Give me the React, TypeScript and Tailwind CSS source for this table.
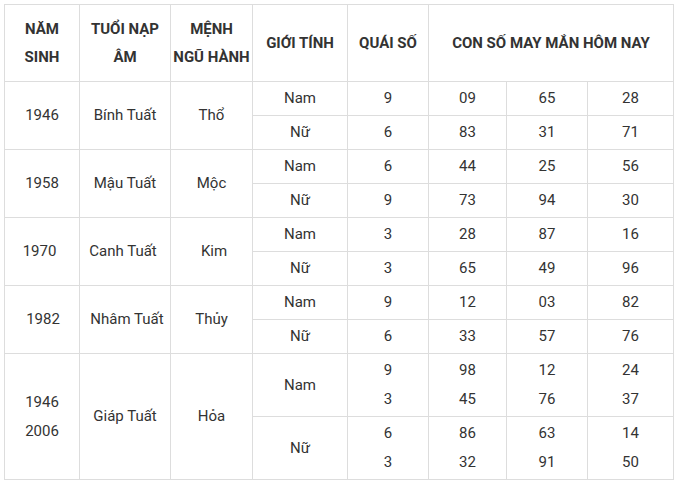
const groups = [
  {
    year: ["1946"],
    nap: "Bính Tuất",
    menh: "Thổ",
    shift: ["", "", ""],
    rows: [
      { sex: "Nam", q: ["9"], n: [["09"], ["65"], ["28"]] },
      { sex: "Nữ", q: ["6"], n: [["83"], ["31"], ["71"]] },
    ],
  },
  {
    year: ["1958"],
    nap: "Mậu Tuất",
    menh: "Mộc",
    shift: ["", "", ""],
    rows: [
      { sex: "Nam", q: ["6"], n: [["44"], ["25"], ["56"]] },
      { sex: "Nữ", q: ["9"], n: [["73"], ["94"], ["30"]] },
    ],
  },
  {
    year: ["1970"],
    nap: "Canh Tuất",
    menh: "Kim",
    shift: ["pr-[5px]", "pr-[4px]", "pl-[5px]"],
    rows: [
      { sex: "Nam", q: ["3"], n: [["28"], ["87"], ["16"]] },
      { sex: "Nữ", q: ["3"], n: [["65"], ["49"], ["96"]] },
    ],
  },
  {
    year: ["1982"],
    nap: "Nhâm Tuất",
    menh: "Thủy",
    shift: ["pl-[2px]", "pl-[4px]", ""],
    rows: [
      { sex: "Nam", q: ["9"], n: [["12"], ["03"], ["82"]] },
      { sex: "Nữ", q: ["6"], n: [["33"], ["57"], ["76"]] },
    ],
  },
  {
    year: ["1946", "2006"],
    nap: "Giáp Tuất",
    menh: "Hỏa",
    shift: ["", "", ""],
    rows: [
      { sex: "Nam", q: ["9", "3"], n: [["98", "45"], ["12", "76"], ["24", "37"]] },
      { sex: "Nữ", q: ["6", "3"], n: [["86", "32"], ["63", "91"], ["14", "50"]] },
    ],
  },
];

const cell = "border border-[#dddddd] text-center align-middle p-0";

function Lines({ items }: { items: string[] }) {
  return (
    <>
      {items.map((t, i) => (
        <div key={i} className="leading-[29px]">
          {t}
        </div>
      ))}
    </>
  );
}

export default function App() {
  return (
    <div className="bg-white w-[680px] h-[486px] pt-[4px] pl-[4px] font-['Roboto',sans-serif] text-[15px] text-[#333333]">
      <table className="border-collapse table-fixed w-[669px]">
        <colgroup>
          <col className="w-[75px]" />
          <col className="w-[91px]" />
          <col className="w-[82px]" />
          <col className="w-[95px]" />
          <col className="w-[81px]" />
          <col className="w-[78px]" />
          <col className="w-[81px]" />
          <col className="w-[86px]" />
        </colgroup>
        <thead>
          <tr className="h-[77px] font-bold uppercase">
            <th className={cell}>
              <div className="leading-[28px]">NĂM</div>
              <div className="leading-[28px]">SINH</div>
            </th>
            <th className={cell}>
              <div className="leading-[28px]">TUỔI NẠP</div>
              <div className="leading-[28px]">ÂM</div>
            </th>
            <th className={cell}>
              <div className="leading-[28px]">MỆNH</div>
              <div className="leading-[28px]">NGŨ HÀNH</div>
            </th>
            <th className={cell}>GIỚI TÍNH</th>
            <th className={cell}>QUÁI SỐ</th>
            <th className={cell} colSpan={3}>
              CON SỐ MAY MẮN HÔM NAY
            </th>
          </tr>
        </thead>
        <tbody>
          {groups.map((g, gi) =>
            g.rows.map((r, ri) => (
              <tr key={`${gi}-${ri}`} className={gi === 4 ? "h-[63px]" : "h-[34px]"}>
                {ri === 0 && (
                  <>
                    <td className={`${cell} ${g.shift[0]}`} rowSpan={2}>
                      <Lines items={g.year} />
                    </td>
                    <td className={`${cell} ${g.shift[1]}`} rowSpan={2}>
                      {g.nap}
                    </td>
                    <td className={`${cell} ${g.shift[2]}`} rowSpan={2}>
                      {g.menh}
                    </td>
                  </>
                )}
                <td className={cell}>{r.sex}</td>
                <td className={cell}>
                  <Lines items={r.q} />
                </td>
                {r.n.map((v, vi) => (
                  <td key={vi} className={cell}>
                    <Lines items={v} />
                  </td>
                ))}
              </tr>
            ))
          )}
        </tbody>
      </table>
    </div>
  );
}
